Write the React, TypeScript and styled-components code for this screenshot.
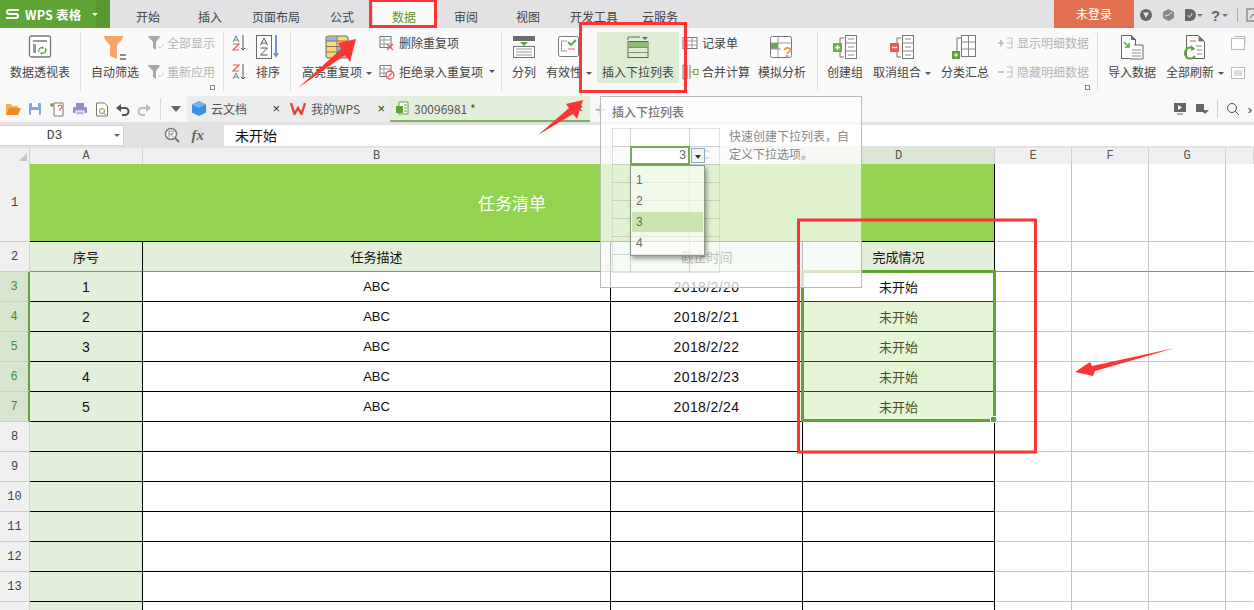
import React from "react";
import styled, { createGlobalStyle } from "styled-components";

const Global = createGlobalStyle`
  html, body { margin: 0; padding: 0; background: #fff; }
  body { width: 1254px; height: 610px; overflow: hidden; font-family: "Noto Sans CJK SC", "Liberation Sans", sans-serif; font-size: 12px; color: #444; }
`;

const Page = styled.div`
  position: relative;
  width: 1254px;
  height: 610px;
  overflow: hidden;
`;

/* ---------- title bar ---------- */
const TitleBar = styled.div`
  display: flex;
  height: 28px;
  background: #e2e2e4;
`;
const Logo = styled.div`
  display: flex;
  align-items: center;
  width: 110px;
  height: 28px;
  background: linear-gradient(to right, #5fa536 96px, #56982f 96px);
  color: #fff;
  font-weight: 700;
  font-size: 12.5px;
  letter-spacing: 0.2px;
`;
const LogoMark = styled.span`
  display: flex;
  margin: 0 5px 0 5px;
`;
const LogoCaret = styled.span`
  margin-left: 11px;
  width: 0;
  height: 0;
  border: 3px solid transparent;
  border-top: 3px solid #fff;
  border-bottom: 0;
`;
const Tabs = styled.div`
  display: flex;
  margin-left: 7px;
`;
const Tab = styled.div<{ $wide?: boolean; $active?: boolean }>`
  width: ${(p) => (p.$wide ? 70 : 62)}px;
  line-height: 33px;
  height: 28px;
  text-align: center;
  color: ${(p) => (p.$active ? "#5a9a2b" : "#444")};
  background: ${(p) => (p.$active ? "#fafafa" : "transparent")};
`;
const Login = styled.div`
  width: 80px;
  height: 28px;
  margin-left: auto;
  margin-right: 120px;
  background: #e07050;
  color: #fff;
  line-height: 28px;
  text-align: center;
`;

const TitleIcons = styled.div`
  position: absolute;
  top: 7px;
  left: 1139px;
  display: flex;
  align-items: center;
  gap: 8px;
`;

/* ---------- ribbon ---------- */
const Ribbon = styled.div`
  display: flex;
  height: 68px;
  background: #fafafa;
`;
const Sep = styled.div`
  flex: none;
  width: 1px;
  height: 59px;
  margin-top: 4px;
  background: #dedede;
`;
const Group = styled.div<{ $w: number }>`
  position: relative;
  display: flex;
  align-items: flex-start;
  flex: none;
  width: ${(p) => p.$w}px;
`;
const Large = styled.div<{ $w: number; $on?: boolean; $ml?: number }>`
  display: flex;
  flex-direction: column;
  align-items: center;
  flex: none;
  width: ${(p) => p.$w}px;
  height: 51px;
  margin-top: 4px;
  margin-left: ${(p) => p.$ml ?? 0}px;
  padding-top: 3px;
  box-sizing: border-box;
  background: ${(p) => (p.$on ? "#deecd3" : "transparent")};
  white-space: nowrap;
`;
const IconBox = styled.div`
  display: flex;
  justify-content: center;
  align-items: flex-start;
  height: 29px;
`;
const Label = styled.div`
  line-height: 16px;
  color: #444;
`;
const Caret = styled.span`
  display: inline-block;
  margin-left: 4px;
  vertical-align: 2px;
  border: 3px solid transparent;
  border-top: 3px solid #555;
  border-bottom: 0;
`;
const Stack = styled.div<{ $ml?: number }>`
  display: flex;
  flex-direction: column;
  flex: none;
  margin-left: ${(p) => p.$ml ?? 0}px;
`;
const Small = styled.div<{ $off?: boolean }>`
  display: flex;
  align-items: center;
  height: 29px;
  gap: 2px;
  white-space: nowrap;
  color: ${(p) => (p.$off ? "#b4b4b4" : "#444")};
`;
const Launcher = styled.span<{ $r: number }>`
  position: absolute;
  right: ${(p) => p.$r}px;
  bottom: 6px;
  width: 3px;
  height: 3px;
  border: 1px solid #888;
`;

/* ---------- quick access + doc tabs ---------- */
const DocBar = styled.div`
  display: flex;
  align-items: center;
  height: 26px;
  background: #f8f8f8;
`;
const Quick = styled.div`
  display: flex;
  align-items: center;
  gap: 7px;
  width: 187px;
  padding-left: 5px;
  box-sizing: border-box;
  flex: none;
`;
const QuickSep = styled.span`
  width: 1px;
  height: 22px;
  background: #d8d8d8;
  margin: 0 3px 0 2px;
`;
const DocTab = styled.div<{ $w: number; $on?: boolean }>`
  display: flex;
  align-items: center;
  gap: 5px;
  flex: none;
  box-sizing: border-box;
  width: ${(p) => p.$w}px;
  height: 26px;
  padding: 0 ${(p) => (p.$on ? 7 : 5)}px 0 5px;
  background: ${(p) => (p.$on ? "#e3eedb" : "#ececec")};
  border-bottom: 2px solid ${(p) => (p.$on ? "#7db35c" : "transparent")};
`;
const DocName = styled.span`
  flex: 1;
  color: #555;
`;
const Close = styled.span`
  color: #333;
  font-size: 13px;
  font-family: "Liberation Sans", sans-serif;
`;
const Plus = styled.span`
  margin-left: 5px;
  font-size: 20px;
  line-height: 18px;
  color: #aaa;
`;
const DocRight = styled.div`
  display: flex;
  align-items: center;
  gap: 8px;
  margin-left: auto;
  padding-right: 2px;
`;
const VLine = styled.span`
  width: 1px;
  height: 18px;
  background: #ccc;
`;

/* ---------- formula bar ---------- */
const FormulaBar = styled.div`
  display: flex;
  align-items: center;
  height: 26px;
  background: #e2e2e4;
`;
const NameBox = styled.div`
  display: flex;
  align-items: center;
  justify-content: center;
  position: relative;
  width: 124px;
  height: 21px;
  box-sizing: border-box;
  background: #fff;
  border: 1px solid #d4d4d4;
  border-left: 0;
  font-family: "Liberation Mono", monospace;
  font-size: 13px;
  color: #444;
  padding-right: 14px;
`;
const NameCaret = styled.span`
  position: absolute;
  right: 3px;
  top: 8px;
  border: 3px solid transparent;
  border-top: 3px solid #666;
  border-bottom: 0;
`;
const FormulaTools = styled.div`
  display: flex;
  align-items: center;
  justify-content: flex-end;
  gap: 12px;
  width: 100px;
  padding-right: 20px;
  box-sizing: border-box;
`;
const Fx = styled.span`
  font-family: "Liberation Serif", serif;
  font-style: italic;
  font-weight: 700;
  font-size: 15px;
  color: #666;
`;
const FormulaInput = styled.div`
  flex: 1;
  height: 21px;
  background: #fff;
  padding-left: 11px;
  font-size: 14px;
  line-height: 20px;
  color: #111;
`;

/* ---------- sheet ---------- */
const Sheet = styled.div`
  position: relative;
`;
const ColHeader = styled.div`
  display: grid;
  grid-template-columns: 30px 113px 468px 192px 192px 77px 77px 77px 28px;
  height: 16px;
`;
const ColCell = styled.div<{ $on?: boolean }>`
  box-sizing: border-box;
  background: ${(p) => (p.$on ? "#dbe7d2" : "#f0f0f0")};
  border-right: 1px solid #d0d0d0;
  border-bottom: 1px solid #c8c8c8;
  font-family: "Liberation Mono", monospace;
  font-size: 12px;
  line-height: 17px;
  text-align: center;
  color: #555;
`;
const Corner = styled.div`
  position: absolute;
  left: 19px;
  top: 5px;
  width: 0;
  height: 0;
  border-left: 8px solid transparent;
  border-bottom: 8px solid #c4c4c4;
`;
const Row = styled.div<{ $h: number }>`
  display: grid;
  grid-template-columns: 30px 113px 468px 192px 192px 77px 77px 77px 28px;
  height: ${(p) => p.$h}px;
`;
const RowHead = styled.div<{ $on?: boolean }>`
  box-sizing: border-box;
  display: flex;
  align-items: center;
  justify-content: center;
  background: ${(p) => (p.$on ? "#d7e5cf" : "#f0f0f0")};
  border-bottom: 1px solid #cdcdcd;
  border-right: ${(p) => (p.$on ? "2px solid #5da530" : "1px solid #d0d0d0")};
  color: ${(p) => (p.$on ? "#3f8f1f" : "#444")};
  font-family: "Liberation Mono", monospace;
  font-size: 12px;
`;
const Cell = styled.div<{
  $bg?: string;
  $line?: string;
  $under?: string;
  $span?: number;
  $color?: string;
  $size?: number;
  $track?: number;
}>`
  box-sizing: border-box;
  display: flex;
  align-items: center;
  justify-content: center;
  grid-column: span ${(p) => p.$span ?? 1};
  background: ${(p) => p.$bg ?? "#fff"};
  border-right: 1px solid ${(p) => p.$line ?? "#000"};
  border-bottom: 1px solid ${(p) => p.$under ?? p.$line ?? "#000"};
  color: ${(p) => p.$color ?? "#111"};
  font-size: ${(p) => p.$size ?? 13}px;
  letter-spacing: ${(p) => p.$track ?? 0}px;
  font-family: "Liberation Sans", "Noto Sans CJK SC", sans-serif;
`;
const Selection = styled.div`
  position: absolute;
  left: 801px;
  top: 122px;
  width: 195px;
  height: 152px;
  box-sizing: border-box;
  border: 3px solid #5da530;
  pointer-events: none;
`;
const Handle = styled.span`
  position: absolute;
  right: -4px;
  bottom: -4px;
  width: 5px;
  height: 5px;
  background: #5da530;
  border: 1px solid #fff;
`;

/* ---------- tooltip ---------- */
const Tip = styled.div`
  position: absolute;
  left: 600px;
  top: 96px;
  width: 262px;
  height: 192px;
  box-sizing: border-box;
  border: 1px solid #b9b9b9;
  background: rgba(255, 255, 255, 0.72);
  padding: 0 11px;
`;
const TipTitle = styled.div`
  height: 31px;
  line-height: 30px;
  color: #777;
  font-weight: 500;
`;
const TipBody = styled.div`
  display: flex;
  gap: 10px;
`;
const TipText = styled.div`
  width: 122px;
  line-height: 18px;
  color: #888;
  margin-top: -1px;
`;
const Mini = styled.div`
  position: relative;
  display: grid;
  grid-template-columns: 18px 59px 30px;
  grid-auto-rows: 18px;
  width: 107px;
  flex: none;
`;
const MiniCell = styled.div`
  box-sizing: border-box;
  border: 1px solid rgba(190, 190, 190, 0.45);
  margin: 0 -1px -1px 0;
`;
const MiniActive = styled.div`
  position: absolute;
  left: 18px;
  top: 18px;
  width: 60px;
  height: 19px;
  box-sizing: border-box;
  border: 2px solid #75ad52;
  background: #fff;
  text-align: right;
  padding-right: 2px;
  line-height: 15px;
  color: #666;
  font-family: "Liberation Sans", sans-serif;
`;
const MiniBtn = styled.div`
  position: absolute;
  left: 79px;
  top: 20px;
  width: 14px;
  height: 15px;
  box-sizing: border-box;
  border: 1px solid #8fa9c4;
  background: #f2f6f2;
`;
const MiniBtnCaret = styled.span`
  position: absolute;
  left: 3px;
  top: 6px;
  border: 3px solid transparent;
  border-top: 4px solid #333;
  border-bottom: 0;
`;
const MiniList = styled.div`
  position: absolute;
  left: 18px;
  top: 37px;
  width: 75px;
  height: 91px;
  box-sizing: border-box;
  border: 1px solid #8a9a85;
  background: rgba(255, 255, 255, 0.55);
  box-shadow: 2px 3px 4px rgba(0, 0, 0, 0.35);
  padding-top: 4px;
`;
const MiniItem = styled.div<{ $on?: boolean }>`
  height: 20px;
  margin: 0 1px 1px;
  padding-left: 4px;
  line-height: 20px;
  font-family: "Liberation Sans", sans-serif;
  color: #666;
  background: ${(p) => (p.$on ? "#cbe5b2" : "transparent")};
`;

const Annotations = styled.svg`
  position: absolute;
  left: 0;
  top: 0;
  pointer-events: none;
`;

/* ---------- icons ---------- */
const PivotIcon = () => (
  <svg width="24" height="24" viewBox="0 0 24 24">
    <rect x="1.5" y="1" width="21" height="21" rx="2" fill="#fff" stroke="#777" strokeWidth="1.3" />
    <path d="M5 5h14v2H5zM5 9h3v9H5z" fill="#9a9a9a" />
    <path d="M11 17a3 3 0 0 1 4-4M17 13a3 3 0 0 1-3 5" stroke="#5fa536" strokeWidth="1.3" fill="none" />
    <path d="M14 11l2 2-2 1zM14 20l-2-2 2-1z" fill="#5fa536" />
  </svg>
);
const FunnelIcon = () => (
  <svg width="26" height="26" viewBox="0 0 26 26">
    <path d="M2 1h19c0 4-5 7-6 10v13l-7-3V11C7 8 2 5 2 1z" fill="#f5a56a" />
    <path d="M18 20h6M18 24h6" stroke="#666" strokeWidth="1.4" />
  </svg>
);
const SmallFunnel = ({ c = "#a8a8a8" }: { c?: string }) => (
  <svg width="18" height="16" viewBox="0 0 18 16">
    <path d="M1 1h12c0 2-3 4-4 6v8l-3-2V7C5 5 1 3 1 1z" fill={c} />
    <path d="M11 11l2 2 4-4" stroke="#c8c8c8" fill="none" />
  </svg>
);
const SortSmall = ({ az }: { az?: boolean }) => (
  <svg width="16" height="18" viewBox="0 0 16 18">
    {az ? (
      <>
        <path d="M2 8l3-6 3 6M3 6h4" stroke="#777" fill="none" />
        <path d="M2 10h6l-6 6h6" stroke="#e25a5a" strokeWidth="1.2" fill="none" />
      </>
    ) : (
      <>
        <path d="M2 2h6L2 8h6" stroke="#e25a5a" strokeWidth="1.2" fill="none" />
        <path d="M2 16l3-6 3 6M3 14h4" stroke="#777" fill="none" />
      </>
    )}
    <path d="M12 1v15M10 14l2 2 2-2" stroke="#555" fill="none" />
  </svg>
);
const SortLarge = () => (
  <svg width="24" height="25" viewBox="0 0 24 25">
    <rect x="0.5" y="0.5" width="15" height="23" fill="#fff" stroke="#666" />
    <path d="M4.5 10l3.5-7 3.5 7M5.5 8h5M4.5 13h7l-7 7h7" stroke="#555" fill="none" />
    <path d="M20 0v18" stroke="#6c95d8" strokeWidth="2" />
    <path d="M17 18h6l-3 5z" fill="#6c95d8" />
  </svg>
);
const HighlightIcon = () => (
  <svg width="24" height="24" viewBox="0 0 24 24">
    <rect x="1" y="1" width="22" height="22" rx="2" fill="#ffd873" stroke="#666" />
    <path d="M2 2h10v4H2z" fill="#8fb4e8" />
    <path d="M12 12h10v5H12zM12 17h10v5H12z" fill="#8fb4e8" />
    <path d="M1 6h22M1 11.5h22M1 17h22M12 1v22" stroke="#777" />
  </svg>
);
const RemoveDup = ({ ban }: { ban?: boolean }) => (
  <svg width="18" height="16" viewBox="0 0 18 16">
    <rect x="1" y="1.5" width="11" height="11" fill="#fff" stroke="#777" />
    <path d="M1 5h11M1 9h11M5 1v12" stroke="#999" />
    {ban ? (
      <>
        <circle cx="11" cy="11" r="4" fill="#fff" stroke="#e25a5a" strokeWidth="1.3" />
        <path d="M8 14l6-6" stroke="#e25a5a" strokeWidth="1.2" />
      </>
    ) : (
      <path d="M8 9l6 6M14 9l-6 6" stroke="#e25a5a" strokeWidth="1.3" />
    )}
  </svg>
);
const SplitIcon = () => (
  <svg width="24" height="24" viewBox="0 0 24 24">
    <rect x="1" y="1" width="22" height="5" fill="#6d6d6d" />
    <path d="M8 7h8l-4 4z" fill="#5fa536" />
    <rect x="1.5" y="11.5" width="21" height="11" fill="#fff" stroke="#777" />
    <path d="M4 14h16M4 17h16M4 20h16" stroke="#999" />
  </svg>
);
const ValidIcon = () => (
  <svg width="24" height="24" viewBox="0 0 24 24">
    <rect x="1.5" y="1.5" width="20" height="20" rx="2" fill="#fff" stroke="#777" />
    <path d="M10 6H4.5v10H10" stroke="#999" fill="none" />
    <path d="M11 7l3 3 5-5" stroke="#5fa536" strokeWidth="1.8" fill="none" />
    <path d="M11 14h7" stroke="#e25a5a" />
  </svg>
);
const ListIcon = () => (
  <svg width="24" height="24" viewBox="0 0 24 24">
    <path d="M2 5V2h12" stroke="#666" fill="none" />
    <path d="M16 2h6l-3 3z" fill="#666" />
    <rect x="2" y="6.5" width="20" height="16" fill="none" stroke="#666" />
    <rect x="2.5" y="7" width="19" height="5" fill="#8dbb6e" />
    <path d="M2 12.5h20M2 17.5h20" stroke="#888" />
  </svg>
);
const RecordIcon = () => (
  <svg width="18" height="14" viewBox="0 0 18 14">
    <rect x="1" y="1.5" width="14" height="11" fill="#fff" stroke="#777" />
    <path d="M5 1.5v11M1 5h14M1 9h14M10 1.5v11" stroke="#999" />
  </svg>
);
const MergeIcon = () => (
  <svg width="18" height="16" viewBox="0 0 18 16">
    <path d="M5 1H1v14h4M5 1v14M8 1v14" stroke="#777" fill="none" />
    <path d="M8 8h4" stroke="#5fa536" />
    <rect x="12" y="5.5" width="4" height="5" fill="#fff" stroke="#5fa536" />
  </svg>
);
const WhatIfIcon = () => (
  <svg width="26" height="24" viewBox="0 0 26 24">
    <rect x="1.5" y="1.5" width="21" height="21" rx="2" fill="#fff" stroke="#777" />
    <rect x="2" y="8" width="7" height="6" fill="#6fa84c" />
    <path d="M2 8h20M9 2v20M2 14h10" stroke="#999" fill="none" />
    <text x="14" y="22" fontSize="15" fontWeight="700" fill="#ef9a4a" fontFamily="Liberation Sans">?</text>
  </svg>
);
const GroupIcon = ({ box, plus }: { box: string; plus?: boolean }) => (
  <svg width="24" height="26" viewBox="0 0 24 26">
    <rect x="12.5" y="0.5" width="11" height="23" fill="#fff" stroke="#777" />
    <path d="M12.5 8h11M12.5 16h11M15 4h6M15 12h6M15 20h6" stroke="#888" />
    <path d="M11 3H7v6M7 17v5h4" stroke="#777" fill="none" />
    <rect x="0" y="8" width="9" height="9" fill={box} />
    <path d={plus ? "M2 12.5h5M4.5 10v5" : "M2 12.5h5"} stroke="#fff" strokeWidth="1.3" />
  </svg>
);
const SubtotalIcon = () => (
  <svg width="26" height="26" viewBox="0 0 26 26">
    <rect x="9.5" y="0.5" width="14" height="21" fill="#fff" stroke="#777" />
    <path d="M9.5 7h14M9.5 14h14M16.5 0.5v21" stroke="#888" />
    <path d="M9 3H5v13" stroke="#777" fill="none" />
    <rect x="0" y="16" width="8" height="8" fill="#5fa536" />
    <path d="M2 20h4M4 18v4" stroke="#fff" />
  </svg>
);
const DetailIcon = ({ plus }: { plus?: boolean }) => (
  <svg width="18" height="14" viewBox="0 0 18 14">
    <path d={plus ? "M1 7h6M4 4v6" : "M1 7h6"} stroke="#bbb" strokeWidth="1.6" />
    <path d="M10 2h5M10 7h5M10 12h5M15 2v10" stroke="#bbb" fill="none" />
  </svg>
);
const ImportIcon = () => (
  <svg width="24" height="26" viewBox="0 0 24 26">
    <path d="M1.5 0.5h10l4 4v19h-14z" fill="#fff" stroke="#666" />
    <path d="M11.5 0.5v4h4z" fill="#777" stroke="#666" />
    <path d="M4 7l5 5M9 8v4H5" stroke="#5fa536" strokeWidth="1.5" fill="none" />
    <path d="M14 10h9v14H10" fill="#fff" stroke="#666" />
    <path d="M12 15h9M12 18h9M12 21h9" stroke="#888" />
  </svg>
);
const RefreshIcon = () => (
  <svg width="24" height="26" viewBox="0 0 24 26">
    <path d="M3.5 0.5h12l6 6v17h-18z" fill="#fff" stroke="#666" />
    <path d="M15.5 0.5v6h6z" fill="#777" />
    <path d="M7 6h6" stroke="#e25a5a" />
    <path d="M13 11h6M14 15h5M14 19h5" stroke="#888" />
    <path d="M11 14a5.5 5.5 0 1 0 1 7" stroke="#5fa536" strokeWidth="2" fill="none" />
    <path d="M8 10l4 4-4 2z" fill="#5fa536" />
  </svg>
);
const PaleIcon = ({ alt }: { alt?: boolean }) => (
  <svg width="16" height="16" viewBox="0 0 16 16">
    <rect x="1.5" y="3.5" width="13" height="11" fill="#fff" stroke="#bbb" />
    {alt ? <path d="M4 6h8v6H4z" fill="#ddd" /> : <path d="M4 1.5h11v8" stroke="#bbb" fill="none" />}
  </svg>
);

const RowsSelected = [3, 4, 5, 6, 7];
const data = [
  [1, "2018/2/20"],
  [2, "2018/2/21"],
  [3, "2018/2/22"],
  [4, "2018/2/23"],
  [5, "2018/2/24"],
] as const;
const GREEN = "#e2efda";
const GRID = "#c4c4c4";
const TIP_TEXT = "快速创建下拉列表\uFF0C自定义下拉选项。";

const TrailCells = ({ under }: { under?: string }) => (
  <>
    <Cell $line={GRID} $under={under} />
    <Cell $line={GRID} $under={under} />
    <Cell $line={GRID} $under={under} />
    <Cell $line="transparent" $under={under ?? GRID} />
  </>
);

export default function App() {
  return (
    <Page>
      <Global />
      <TitleBar>
        <Logo>
          <LogoMark>
            <svg width="15" height="12" viewBox="0 0 15 12">
              <path d="M14 2H4a2 2 0 0 0 0 4h7a2 2 0 0 1 0 4H1" stroke="#fff" strokeWidth="2" fill="none" />
            </svg>
          </LogoMark>
          WPS 表格
          <LogoCaret />
        </Logo>
        <Tabs>
          <Tab>开始</Tab>
          <Tab>插入</Tab>
          <Tab $wide>页面布局</Tab>
          <Tab>公式</Tab>
          <Tab $active>数据</Tab>
          <Tab>审阅</Tab>
          <Tab>视图</Tab>
          <Tab $wide>开发工具</Tab>
          <Tab>云服务</Tab>
        </Tabs>
        <Login>未登录</Login>
        <TitleIcons>
          <svg width="14" height="14" viewBox="0 0 14 14"><circle cx="7" cy="7" r="6" fill="#666" /><path d="M4 4.5l6 0L7 10z" fill="#e2e2e4" /></svg>
          <svg width="15" height="14" viewBox="0 0 15 14"><path d="M7.5 1l5.500 3v6l-5.500 3L2 10V4z" fill="#888" /><path d="M4 8l4-1 3-3" stroke="#e2e2e4" fill="none" /></svg>
          <svg width="19" height="14" viewBox="0 0 19 14"><path d="M1 1h5a6 6 0 0 1 0 12H1z" fill="#666" /><path d="M4 7c0 3 3 3 4-2" stroke="#e2e2e4" fill="none" /><path d="M13 6h6l-3 3z" fill="#777" /></svg>
          <svg width="18" height="16" viewBox="0 0 18 16"><text x="0" y="14" fontSize="15" fontWeight="700" fill="#666" fontFamily="Liberation Sans">?</text><path d="M11 7h6l-3 3z" fill="#777" /></svg>
          <svg width="1" height="14"><rect width="1" height="14" fill="#aaa" /></svg>
          <svg width="14" height="14" viewBox="0 0 14 14"><rect x="1" y="1" width="12" height="12" fill="none" stroke="#666" /><path d="M4 10l3-4 3 2" stroke="#666" fill="none" /></svg>
        </TitleIcons>
      </TitleBar>

      <Ribbon>
        <Group $w={80}>
          <Large $w={80}><IconBox><PivotIcon /></IconBox><Label>数据透视表</Label></Large>
        </Group>
        <Sep />
        <Group $w={142}>
          <Large $w={54} $ml={7}><IconBox><FunnelIcon /></IconBox><Label>自动筛选</Label></Large>
          <Stack $ml={5}>
            <Small $off><SmallFunnel />全部显示</Small>
            <Small $off><SmallFunnel />重新应用</Small>
          </Stack>
          <Launcher $r={8} />
        </Group>
        <Sep />
        <Group $w={66}>
          <Stack $ml={7}>
            <Small><SortSmall az /></Small>
            <Small><SortSmall /></Small>
          </Stack>
          <Large $w={32} $ml={5}><IconBox><SortLarge /></IconBox><Label>排序</Label></Large>
        </Group>
        <Sep />
        <Group $w={210}>
          <Large $w={84} $ml={4}><IconBox><HighlightIcon /></IconBox><Label>高亮重复项<Caret /></Label></Large>
          <Stack>
            <Small><RemoveDup />删除重复项</Small>
            <Small><RemoveDup ban />拒绝录入重复项<Caret /></Small>
          </Stack>
        </Group>
        <Sep />
        <Group $w={315}>
          <Large $w={36} $ml={4}><IconBox><SplitIcon /></IconBox><Label>分列</Label></Large>
          <Large $w={54}><IconBox><ValidIcon /></IconBox><Label>有效性<Caret /></Label></Large>
          <Large $w={82} $ml={1} $on><IconBox><ListIcon /></IconBox><Label>插入下拉列表</Label></Large>
          <Stack $ml={3}>
            <Small><RecordIcon />记录单</Small>
            <Small><MergeIcon />合并计算</Small>
          </Stack>
          <Large $w={62} $ml={1}><IconBox><WhatIfIcon /></IconBox><Label>模拟分析</Label></Large>
        </Group>
        <Sep />
        <Group $w={279}>
          <Large $w={54}><IconBox><GroupIcon box="#6fae4e" plus /></IconBox><Label>创建组</Label></Large>
          <Large $w={60}><IconBox><GroupIcon box="#e8585a" /></IconBox><Label>取消组合<Caret /></Label></Large>
          <Large $w={60} $ml={3}><IconBox><SubtotalIcon /></IconBox><Label>分类汇总</Label></Large>
          <Stack $ml={2}>
            <Small $off><DetailIcon plus />显示明细数据</Small>
            <Small $off><DetailIcon />隐藏明细数据</Small>
          </Stack>
          <Launcher $r={7} />
        </Group>
        <Sep />
        <Group $w={157}>
          <Large $w={58} $ml={5}><IconBox><ImportIcon /></IconBox><Label>导入数据</Label></Large>
          <Large $w={68}><IconBox><RefreshIcon /></IconBox><Label>全部刷新<Caret /></Label></Large>
          <Stack $ml={1}>
            <Small><PaleIcon /></Small>
            <Small><PaleIcon alt /></Small>
          </Stack>
        </Group>
      </Ribbon>

      <DocBar>
        <Quick>
          <svg width="16" height="14" viewBox="0 0 16 14"><path d="M1 2h5l1 2h6v3H4L1 13z" fill="#f7b05a" /><path d="M4 6h12l-3 7H1z" fill="#f08a24" /></svg>
          <svg width="14" height="14" viewBox="0 0 14 14"><rect x="1" y="1" width="12" height="12" rx="1" fill="#7da7e6" /><rect x="4" y="1" width="6" height="4" fill="#fff" /><rect x="3" y="8" width="8" height="5" fill="#fff" /></svg>
          <svg width="16" height="15" viewBox="0 0 16 15"><path d="M5 1h9v13H5z" fill="#fff" stroke="#777" /><path d="M9 5a2 2 0 1 1 2 2v2" stroke="#d84a4a" fill="none" /><path d="M1 3h4M3 1v4" stroke="#5fa536" strokeWidth="1.4" /></svg>
          <svg width="16" height="14" viewBox="0 0 16 14"><rect x="4" y="1" width="8" height="4" fill="#8d8fc9" /><rect x="1" y="5" width="14" height="6" rx="1" fill="#8d8fc9" /><rect x="4" y="9" width="8" height="4" fill="#b8b9e0" stroke="#fff" /></svg>
          <svg width="14" height="15" viewBox="0 0 14 15"><path d="M1.5 1h8l3 3v10h-11z" fill="#fff" stroke="#777" /><circle cx="7" cy="9" r="2.5" fill="none" stroke="#5fa536" /><path d="M9 11l2 2" stroke="#5fa536" /></svg>
          <svg width="14" height="13" viewBox="0 0 14 13"><path d="M3 5h6a3.5 3.5 0 0 1 0 7H6" stroke="#555" strokeWidth="2" fill="none" /><path d="M5 1v8L0 5z" fill="#555" /></svg>
          <svg width="14" height="13" viewBox="0 0 14 13"><path d="M11 5H5a3.5 3.5 0 0 0 0 7h3" stroke="#bbb" strokeWidth="2" fill="none" /><path d="M9 1v8l5-4z" fill="#bbb" /></svg>
          <QuickSep />
          <svg width="10" height="6" viewBox="0 0 10 6"><path d="M0 0h10L5 6z" fill="#666" /></svg>
        </Quick>
        <DocTab $w={98}>
          <svg width="14" height="15" viewBox="0 0 14 15"><path d="M7 0l7 3.5v8L7 15 0 11.5v-8z" fill="#3d8fe0" /><path d="M7 7l7-3.5L7 0 0 3.5z" fill="#6fb5f2" /></svg>
          <DocName>云文档</DocName>
          <Close>×</Close>
        </DocTab>
        <DocTab $w={105}>
          <svg width="16" height="13" viewBox="0 0 16 13"><path d="M1 1l3.5 11L8 6l3.5 6L15 1" stroke="#e8403a" strokeWidth="2.4" fill="none" /></svg>
          <DocName>我的WPS</DocName>
          <Close>×</Close>
        </DocTab>
        <DocTab $w={200} $on>
          <svg width="14" height="14" viewBox="0 0 14 14"><path d="M4 1h9v12H4z" fill="#fff" stroke="#6a9c4a" /><rect x="1" y="5" width="7" height="7" fill="#5fa536" /><path d="M9 4h3M9 7h3M9 10h3" stroke="#6a9c4a" /></svg>
          <DocName>30096981 *</DocName>
          <Close>×</Close>
        </DocTab>
        <Plus>+</Plus>
        <DocRight>
          <svg width="14" height="14" viewBox="0 0 14 14"><rect x="1" y="1" width="12" height="9" fill="#666" /><path d="M5 3l4 2.5L5 8z" fill="#fff" /><path d="M4 12h6" stroke="#666" /></svg>
          <svg width="14" height="14" viewBox="0 0 14 14"><path d="M1 2h8v8H1z" fill="#666" /><path d="M6 8h8l-4 4z" fill="#666" /></svg>
          <VLine />
          <svg width="14" height="14" viewBox="0 0 14 14"><circle cx="6" cy="6" r="4.5" fill="none" stroke="#555" /><path d="M9 9l4 4" stroke="#555" /></svg>
          <Close>›</Close>
        </DocRight>
      </DocBar>

      <FormulaBar>
        <NameBox>D3<NameCaret /></NameBox>
        <FormulaTools>
          <svg width="16" height="16" viewBox="0 0 16 16"><circle cx="7" cy="7" r="5.5" fill="#fff" stroke="#777" strokeWidth="1.5" /><path d="M11 11l4 4" stroke="#777" strokeWidth="2" /><path d="M5 10V4h3a1.5 1.5 0 0 1 0 3H5M7 7l2 3" stroke="#888" fill="none" /></svg>
          <Fx>fx</Fx>
        </FormulaTools>
        <FormulaInput>未开始</FormulaInput>
      </FormulaBar>

      <Sheet>
        <ColHeader>
          <ColCell />
          <ColCell>A</ColCell>
          <ColCell>B</ColCell>
          <ColCell>C</ColCell>
          <ColCell $on>D</ColCell>
          <ColCell>E</ColCell>
          <ColCell>F</ColCell>
          <ColCell>G</ColCell>
          <ColCell />
        </ColHeader>
        <Corner />

        <Row $h={78}>
          <RowHead>1</RowHead>
          <Cell $span={4} $bg="#93d34f" $color="#fff" $size={17}>任务清单</Cell>
          <TrailCells />
        </Row>
        <Row $h={30}>
          <RowHead>2</RowHead>
          {["序号", "任务描述", "截止时间", "完成情况"].map((t) => (
            <Cell key={t} $bg={GREEN} $under="#6aa84f">{t}</Cell>
          ))}
          <TrailCells under="#6aa84f" />
        </Row>
        {data.map(([n, d]) => (
          <Row $h={30} key={n}>
            <RowHead $on={RowsSelected.includes(n + 2)}>{n + 2}</RowHead>
            <Cell $bg={GREEN} $size={14}>{n}</Cell>
            <Cell>ABC</Cell>
            <Cell $size={14} $track={0.4}>{d}</Cell>
            <Cell
              $bg={n === 1 ? "#fff" : "#e4f6d6"}
              $under={n === 5 ? "#000" : "#2f3f20"}
              $color={n === 1 ? "#111" : "#4a4f2a"}
            >
              未开始
            </Cell>
            <TrailCells />
          </Row>
        ))}
        {[8, 9, 10, 11, 12, 13, 0].map((n) => (
          <Row $h={30} key={n}>
            <RowHead>{n > 0 ? n : ""}</RowHead>
            <Cell $bg={GREEN} />
            <Cell />
            <Cell />
            <Cell />
            <TrailCells />
          </Row>
        ))}
        <Selection><Handle /></Selection>
      </Sheet>

      <Tip>
        <TipTitle>插入下拉列表</TipTitle>
        <TipBody>
          <Mini>
            {Array.from({ length: 24 }, (_, i) => (
              <MiniCell key={i} />
            ))}
            <MiniActive>3</MiniActive>
            <MiniBtn><MiniBtnCaret /></MiniBtn>
            <MiniList>
              <MiniItem>1</MiniItem>
              <MiniItem>2</MiniItem>
              <MiniItem $on>3</MiniItem>
              <MiniItem>4</MiniItem>
            </MiniList>
          </Mini>
          <TipText>{TIP_TEXT}</TipText>
        </TipBody>
      </Tip>

      <Annotations width="1254" height="610">
        <g fill="none" stroke="#fb3535" strokeWidth="3">
          <rect x="370.5" y="0.5" width="65" height="26" />
          <rect x="580.5" y="23.5" width="105" height="68" />
          <rect x="798.5" y="220" width="237" height="232" />
        </g>
        <g fill="#fb3535">
          <polygon points="298,88 341,49 338,43 356,39 350,62 345,55" />
          <polygon points="538,135 569,108 566,104 583,100 577,119 573,114" />
          <polygon points="1175,348 1095,371 1093,376 1075,372 1090,362 1092,366" />
        </g>
      </Annotations>
    </Page>
  );
}
